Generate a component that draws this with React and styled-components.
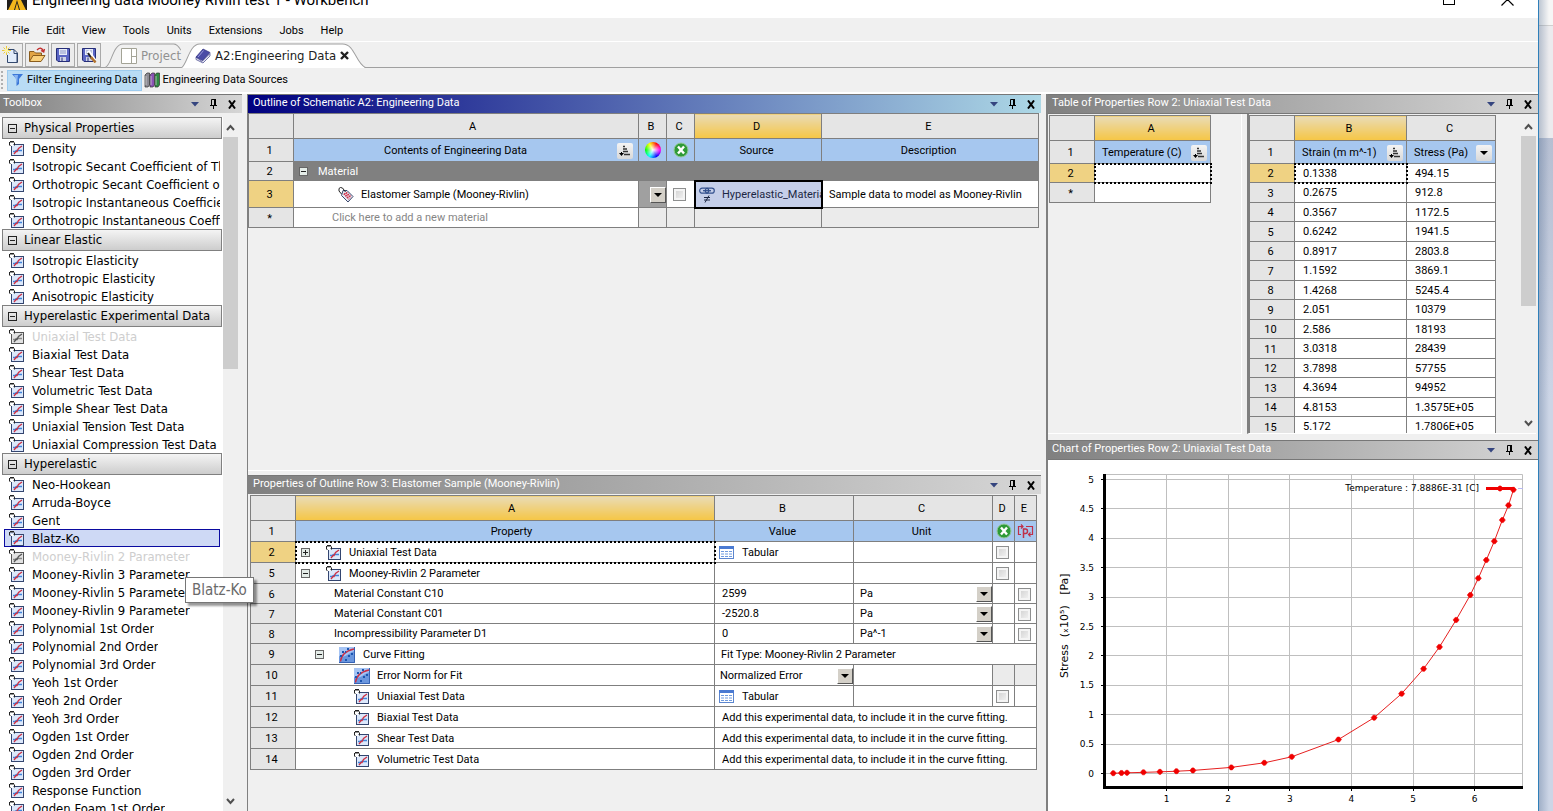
import { useState } from 'react';
import styled, { createGlobalStyle } from 'styled-components';

const UI_FONT = `Roboto, 'Noto Sans', sans-serif`;
const LIST_FONT = `'DejaVu Sans Condensed', 'Noto Sans', sans-serif`;

const COLOURS = {
  face: '#f0f0f0',
  line: '#7f7f7f',
  rowHead: '#e5e5e5',
  selectedHead: '#efd283',
  columnTitle: '#a6c7ef',
  disabled: '#ebebeb',
};

const CATEGORIES = [
  {
    name: 'Physical Properties',
    items: [
      'Density',
      'Isotropic Secant Coefficient of Thermal Expansion',
      'Orthotropic Secant Coefficient of Thermal Expansion',
      'Isotropic Instantaneous Coefficient of Thermal Expansion',
      'Orthotropic Instantaneous Coefficient of Thermal Expansion',
    ],
  },
  {
    name: 'Linear Elastic',
    items: ['Isotropic Elasticity', 'Orthotropic Elasticity', 'Anisotropic Elasticity'],
  },
  {
    name: 'Hyperelastic Experimental Data',
    items: [
      'Uniaxial Test Data',
      'Biaxial Test Data',
      'Shear Test Data',
      'Volumetric Test Data',
      'Simple Shear Test Data',
      'Uniaxial Tension Test Data',
      'Uniaxial Compression Test Data',
    ],
  },
  {
    name: 'Hyperelastic',
    items: [
      'Neo-Hookean',
      'Arruda-Boyce',
      'Gent',
      'Blatz-Ko',
      'Mooney-Rivlin 2 Parameter',
      'Mooney-Rivlin 3 Parameter',
      'Mooney-Rivlin 5 Parameter',
      'Mooney-Rivlin 9 Parameter',
      'Polynomial 1st Order',
      'Polynomial 2nd Order',
      'Polynomial 3rd Order',
      'Yeoh 1st Order',
      'Yeoh 2nd Order',
      'Yeoh 3rd Order',
      'Ogden 1st Order',
      'Ogden 2nd Order',
      'Ogden 3rd Order',
      'Response Function',
      'Ogden Foam 1st Order',
    ],
  },
];

const IN_USE = ['Uniaxial Test Data', 'Mooney-Rivlin 2 Parameter'];

const TEST_DATA = [
  ['0.1338', '494.15'],
  ['0.2675', '912.8'],
  ['0.3567', '1172.5'],
  ['0.6242', '1941.5'],
  ['0.8917', '2803.8'],
  ['1.1592', '3869.1'],
  ['1.4268', '5245.4'],
  ['2.051', '10379'],
  ['2.586', '18193'],
  ['3.0318', '28439'],
  ['3.7898', '57755'],
  ['4.3694', '94952'],
  ['4.8153', '1.3575E+05'],
  ['5.172', '1.7806E+05'],
];

const UPPER_POINTS = [
  [5.43, 215300],
  [5.7, 261200],
  [5.93, 303500],
  [6.06, 332000],
  [6.19, 363000],
  [6.32, 395000],
  [6.45, 431000],
  [6.55, 456000],
  [6.63, 482500],
];

function App() {
  return (
    <Desktop>
      <GlobalStyle />
      <Window>
        <TitleBar>
          <AnsysIcon />
          <TitleText>Engineering data Mooney Rivlin test 1 - Workbench</TitleText>
          <WindowControls />
        </TitleBar>
        <MenuBar>
          {['File', 'Edit', 'View', 'Tools', 'Units', 'Extensions', 'Jobs', 'Help'].map((name) => (
            <MenuItem key={name}>{name}</MenuItem>
          ))}
        </MenuBar>
        <ToolBar />
        <FilterBar>
          <Grip />
          <FilterButton $active>
            <FunnelIcon />
            Filter Engineering Data
          </FilterButton>
          <FilterButton>
            <BooksIcon />
            Engineering Data Sources
          </FilterButton>
        </FilterBar>
        <Workspace>
          <Toolbox />
          <Centre>
            <OutlinePanel />
            <PropertiesPanel />
          </Centre>
          <Right>
            <TablePanel />
            <ChartPanel />
          </Right>
        </Workspace>
      </Window>
      <Behind />
    </Desktop>
  );
}

function ToolBar() {
  return (
    <Tools>
      <ToolButton aria-label="New">
        <NewIcon />
      </ToolButton>
      <ToolButton aria-label="Open">
        <OpenIcon />
      </ToolButton>
      <ToolButton aria-label="Save">
        <SaveIcon />
      </ToolButton>
      <ToolButton aria-label="Save as">
        <SaveIcon pen />
      </ToolButton>
      <Tabs>
        <Tab>
          <TabShape viewBox="0 0 84 24" preserveAspectRatio="none">
            <path d="M0 23.5C7 23 8 1 20 1H76Q80 1 84 7" fill="#f0f0f0" stroke="#a0a0a0" />
          </TabShape>
          <ProjectIcon />
          Project
        </Tab>
        <Tab $active>
          <TabShape viewBox="0 0 188 24" preserveAspectRatio="none">
            <path d="M0 24C6 22 8 1 19 1H164C177 1 177 20 188 24" fill="#fff" stroke="#a0a0a0" />
          </TabShape>
          <BookIcon />
          A2:Engineering Data
          <CloseIcon />
        </Tab>
      </Tabs>
    </Tools>
  );
}

function PanelTitle({ children, active }) {
  return (
    <TitleStrip $active={active}>
      <PanelName>{children}</PanelName>
      <StripButton aria-label="Panel menu">
        <svg width="8" height="5">
          <path d="M0 0H8L4 4.5Z" fill="#35457f" />
        </svg>
      </StripButton>
      <StripButton aria-label="Pin">
        <svg width="9" height="11" fill="none" stroke="#000">
          <path d="M2.5 6V.5H7M1 6.5H8M4.5 6V10" />
          <path d="M6 0V6" strokeWidth="2" />
        </svg>
      </StripButton>
      <StripButton aria-label="Close">
        <svg width="8" height="9" stroke="#000" strokeWidth="2">
          <path d="M1 .5L7 8.5M7 .5L1 8.5" />
        </svg>
      </StripButton>
    </TitleStrip>
  );
}

function Toolbox() {
  const [selected, setSelected] = useState('Blatz-Ko');

  return (
    <ToolboxPanel>
      <PanelTitle>Toolbox</PanelTitle>
      <ToolboxBody>
        <ToolboxList>
          {CATEGORIES.map(({ name, items }) => (
            <section key={name}>
              <Category>
                <BoxSign />
                {name}
              </Category>
              {items.map((item) => (
                <Item
                  key={item}
                  $selected={item === selected}
                  disabled={IN_USE.includes(item)}
                  onClick={() => setSelected(item)}
                >
                  <ModelIcon grey={IN_USE.includes(item)} />
                  <ItemName>{item}</ItemName>
                  {item === selected && <Tooltip role="tooltip">{item}</Tooltip>}
                </Item>
              ))}
            </section>
          ))}
        </ToolboxList>
        <Scrollbar thumb={232} />
      </ToolboxBody>
    </ToolboxPanel>
  );
}

function Scrollbar({ thumb }) {
  return (
    <Track>
      <ScrollButton aria-label="Scroll up">
        <Chevron />
      </ScrollButton>
      <Thumb style={{ height: thumb }} />
      <ScrollButton aria-label="Scroll down">
        <Chevron down />
      </ScrollButton>
    </Track>
  );
}

function OutlinePanel() {
  return (
    <OutlineBox>
      <PanelTitle active>Outline of Schematic A2: Engineering Data</PanelTitle>
      <Sheet>
        <colgroup>
          <Col $width={45} />
          <Col />
          <Col $width={28} />
          <Col $width={28} />
          <Col $width={127} />
          <Col $width={217} />
        </colgroup>
        <tbody>
          <Row $height={25}>
            <RowHead />
            <Letter $wide>A</Letter>
            <Letter>B</Letter>
            <Letter>C</Letter>
            <Letter $selected>D</Letter>
            <Letter>E</Letter>
          </Row>
          <Row $height={23}>
            <RowHead>1</RowHead>
            <ColumnTitle>
              <TitleWithButton>
                <span>Contents of Engineering Data</span>
                <SortButton />
              </TitleWithButton>
            </ColumnTitle>
            <ColumnTitle>
              <ColourWheel />
            </ColumnTitle>
            <ColumnTitle>
              <SuppressIcon />
            </ColumnTitle>
            <ColumnTitle>Source</ColumnTitle>
            <ColumnTitle>Description</ColumnTitle>
          </Row>
          <Row $height={19}>
            <RowHead>2</RowHead>
            <GroupCell colSpan={5}>
              <Line $indent={5} $gap={10}>
                <BoxSign shaded />
                Material
              </Line>
            </GroupCell>
          </Row>
          <Row $height={27}>
            <RowHead $selected>3</RowHead>
            <Cell>
              <Line $indent={44} $gap={7}>
                <TagIcon />
                Elastomer Sample (Mooney-Rivlin)
              </Line>
            </Cell>
            <Cell $fill="#a0a0a0">
              <Picker label="Colour" />
            </Cell>
            <Cell $centre>
              <Check label="Suppress Elastomer Sample" />
            </Cell>
            <Cell $fill="#c5cfe9" $boxed>
              <Line $indent={4} $gap={7}>
                <LinkIcon />
                Hyperelastic_Materials.xml
              </Line>
            </Cell>
            <Cell $indent={7}>Sample data to model as Mooney-Rivlin</Cell>
          </Row>
          <Row $height={20}>
            <RowHead>*</RowHead>
            <Cell $indent={38} $muted>
              Click here to add a new material
            </Cell>
            <Cell $fill={COLOURS.disabled} />
            <Cell $fill={COLOURS.disabled} />
            <Cell $fill={COLOURS.disabled} />
            <Cell $fill={COLOURS.disabled} />
          </Row>
        </tbody>
      </Sheet>
    </OutlineBox>
  );
}

function PropertiesPanel() {
  const constants = [
    [6, 'Material Constant C10', '2599', 'Pa'],
    [7, 'Material Constant C01', '-2520.8', 'Pa'],
    [8, 'Incompressibility Parameter D1', '0', 'Pa^-1'],
  ];
  const missing = [
    [12, 'Biaxial Test Data'],
    [13, 'Shear Test Data'],
    [14, 'Volumetric Test Data'],
  ];

  return (
    <PropertiesBox>
      <PanelTitle>Properties of Outline Row 3: Elastomer Sample (Mooney-Rivlin)</PanelTitle>
      <Inset>
        <Sheet>
          <colgroup>
            <Col $width={45} />
            <Col />
            <Col $width={139} />
            <Col $width={139} />
            <Col $width={22} />
            <Col $width={22} />
          </colgroup>
          <tbody>
            <Row $height={25}>
              <RowHead />
              <Letter $selected $wide>
                A
              </Letter>
              <Letter>B</Letter>
              <Letter>C</Letter>
              <Letter>D</Letter>
              <Letter>E</Letter>
            </Row>
            <Row $height={21}>
              <RowHead>1</RowHead>
              <ColumnTitle $wide>Property</ColumnTitle>
              <ColumnTitle>Value</ColumnTitle>
              <ColumnTitle>Unit</ColumnTitle>
              <ColumnTitle>
                <SuppressIcon />
              </ColumnTitle>
              <ColumnTitle>
                <ParameterIcon />
              </ColumnTitle>
            </Row>
            <Row $height={21}>
              <RowHead $selected>2</RowHead>
              <Cell $dotted>
                <Line $indent={5} $gap={16}>
                  <BoxSign plus shaded />
                  <IconText>
                    <ModelIcon />
                    Uniaxial Test Data
                  </IconText>
                </Line>
              </Cell>
              <Cell>
                <Line $indent={4} $gap={8}>
                  <GridIcon />
                  Tabular
                </Line>
              </Cell>
              <Cell />
              <Cell $centre>
                <Check label="Suppress Uniaxial Test Data" />
              </Cell>
              <Cell />
            </Row>
            <Row $height={21}>
              <RowHead>5</RowHead>
              <Cell>
                <Line $indent={5} $gap={16}>
                  <BoxSign shaded />
                  <IconText>
                    <ModelIcon />
                    Mooney-Rivlin 2 Parameter
                  </IconText>
                </Line>
              </Cell>
              <Cell />
              <Cell />
              <Cell $centre>
                <Check label="Suppress Mooney-Rivlin 2 Parameter" />
              </Cell>
              <Cell />
            </Row>
            {constants.map(([row, name, value, unit]) => (
              <Row $height={20} key={row}>
                <RowHead>{row}</RowHead>
                <Cell $indent={38}>{name}</Cell>
                <Cell $indent={7}>{value}</Cell>
                <Cell>
                  <Picker label={`Unit of ${name}`} options={[unit]} indent={6} />
                </Cell>
                <Cell />
                <Cell $centre>
                  <Check label={`Parameterize ${name}`} />
                </Cell>
              </Row>
            ))}
            <Row $height={21}>
              <RowHead>9</RowHead>
              <Cell>
                <Line $indent={19} $gap={15}>
                  <BoxSign shaded />
                  <IconText>
                    <FitIcon />
                    Curve Fitting
                  </IconText>
                </Line>
              </Cell>
              <Cell $indent={6} colSpan={4}>
                Fit Type: Mooney-Rivlin 2 Parameter
              </Cell>
            </Row>
            <Row $height={21}>
              <RowHead>10</RowHead>
              <Cell>
                <Line $indent={58} $gap={7}>
                  <FitIcon />
                  Error Norm for Fit
                </Line>
              </Cell>
              <Cell>
                <Picker label="Error norm for fit" options={['Normalized Error']} indent={5} />
              </Cell>
              <Cell />
              <Cell $fill={COLOURS.disabled} />
              <Cell $fill={COLOURS.disabled} />
            </Row>
            <Row $height={21}>
              <RowHead>11</RowHead>
              <Cell>
                <Line $indent={58} $gap={8}>
                  <ModelIcon />
                  Uniaxial Test Data
                </Line>
              </Cell>
              <Cell>
                <Line $indent={4} $gap={8}>
                  <GridIcon />
                  Tabular
                </Line>
              </Cell>
              <Cell />
              <Cell $centre>
                <Check label="Suppress Uniaxial Test Data in curve fitting" />
              </Cell>
              <Cell />
            </Row>
            {missing.map(([row, name]) => (
              <Row $height={21} key={row}>
                <RowHead>{row}</RowHead>
                <Cell>
                  <Line $indent={58} $gap={8}>
                    <ModelIcon />
                    {name}
                  </Line>
                </Cell>
                <Cell $indent={7} colSpan={4}>
                  Add this experimental data, to include it in the curve fitting.
                </Cell>
              </Row>
            ))}
          </tbody>
        </Sheet>
      </Inset>
    </PropertiesBox>
  );
}

function TablePanel() {
  return (
    <TableBox>
      <PanelTitle>Table of Properties Row 2: Uniaxial Test Data</PanelTitle>
      <Split>
        <TemperaturePane>
          <Sheet>
            <colgroup>
              <Col $width={45} />
              <Col $width={116} />
            </colgroup>
            <tbody>
              <Row $height={25}>
                <RowHead />
                <Letter $selected>A</Letter>
              </Row>
              <Row $height={23}>
                <RowHead>1</RowHead>
                <ColumnTitle>
                  <HeadLine>
                    Temperature (C)
                    <SortButton />
                  </HeadLine>
                </ColumnTitle>
              </Row>
              <Row $height={19}>
                <RowHead $selected>2</RowHead>
                <Cell $dotted />
              </Row>
              <Row $height={20}>
                <RowHead>*</RowHead>
                <Cell />
              </Row>
            </tbody>
          </Sheet>
        </TemperaturePane>
        <DataPane>
          <DataScroll>
            <Sheet>
              <colgroup>
                <Col $width={45} />
                <Col $width={112} />
                <Col $width={89} />
              </colgroup>
              <tbody>
                <Row $height={25}>
                  <RowHead />
                  <Letter $selected>B</Letter>
                  <Letter>C</Letter>
                </Row>
                <Row $height={23}>
                  <RowHead>1</RowHead>
                  <ColumnTitle>
                    <HeadLine>
                      Strain (m m^-1)
                      <SortButton />
                    </HeadLine>
                  </ColumnTitle>
                  <ColumnTitle>
                    <HeadLine>
                      Stress (Pa)
                      <SortButton plain />
                    </HeadLine>
                  </ColumnTitle>
                </Row>
                {TEST_DATA.map(([strain, stress], index) => (
                  <Row $height={index % 2 ? 20 : 19} key={strain}>
                    <RowHead $selected={index === 0}>{index + 2}</RowHead>
                    <Cell $indent={8} $dotted={index === 0}>
                      {strain}
                    </Cell>
                    <Cell $indent={8}>{stress}</Cell>
                  </Row>
                ))}
              </tbody>
            </Sheet>
          </DataScroll>
          <Scrollbar thumb={170} />
        </DataPane>
      </Split>
    </TableBox>
  );
}

const getX = (strain) => 57 + strain * 61.6;
const getY = (stress) => 313.5 - (stress / 100000) * 58.8;

function ChartPanel() {
  const points = [...TEST_DATA.map((pair) => pair.map(Number)), ...UPPER_POINTS].map(
    ([strain, stress]) => [getX(strain), getY(stress)]
  );
  const xTicks = [1, 2, 3, 4, 5, 6];
  const yTicks = [0, 0.5, 1, 1.5, 2, 2.5, 3, 3.5, 4, 4.5, 5];

  return (
    <ChartBox>
      <PanelTitle>Chart of Properties Row 2: Uniaxial Test Data</PanelTitle>
      <ChartArea>
        <Chart width="490" height="351" viewBox="0 0 490 351">
          <g stroke="#bfbfbf">
            <path d="M57 14.5H474.5V327" fill="none" />
            {xTicks.map((tick) => (
              <path key={tick} d={`M${Math.floor(getX(tick))}.5 15V327`} />
            ))}
            {yTicks.map((tick) => (
              <path key={tick} d={`M57 ${Math.floor(getY(tick * 100000))}.5H474`} />
            ))}
          </g>
          <path d="M56.5 14V327.5H475" fill="none" stroke="#000" strokeWidth="3" />
          <g stroke="#000">
            {xTicks.map((tick) => (
              <path key={tick} d={`M${Math.floor(getX(tick))}.5 327V331`} />
            ))}
            {yTicks.map((tick) => (
              <path key={tick} d={`M53 ${Math.floor(getY(tick * 100000))}.5H57`} />
            ))}
          </g>
          {xTicks.map((tick) => (
            <text key={tick} x={getX(tick)} y="342" textAnchor="middle">
              {tick}
            </text>
          ))}
          {yTicks.map((tick) => (
            <text key={tick} x="46" y={getY(tick * 100000) + 3} textAnchor="end">
              {tick}
            </text>
          ))}
          <AxisName transform="translate(20 218) rotate(-90)">
            {'Stress  (ₓ10⁵)   [Pa]'}
          </AxisName>
          <text x="431" y="31" textAnchor="end">
            Temperature : 7.8886E-31 [C]
          </text>
          <path d="M438 28.5H466" stroke="#f00000" strokeWidth="3" />
          <path d="M470 28.5H475" stroke="#b8b8f0" />
          <polyline
            points={points.map((point) => point.join()).join(' ')}
            fill="none"
            stroke="#e62020"
          />
          {[...points, [452, 28.5]].map(([x, y]) => (
            <path
              key={x}
              d={`M${x - 3} ${y}l2 -2.5h2l2 2.5l-2 2.5h-2z`}
              fill="#f00000"
              stroke="#f00000"
              strokeWidth="0.6"
            />
          ))}
        </Chart>
      </ChartArea>
    </ChartBox>
  );
}

function Picker({ label, options = [''], indent = 0 }) {
  return (
    <PickerBox>
      <Select aria-label={label} $indent={indent}>
        {options.map((option) => (
          <option key={option}>{option}</option>
        ))}
      </Select>
      <PickerArrow>
        <svg width="8" height="4">
          <path d="M0 0H8L4 4Z" />
        </svg>
      </PickerArrow>
    </PickerBox>
  );
}

function Check({ label }) {
  return <Checkbox type="checkbox" aria-label={label} />;
}

function SortButton({ plain }) {
  return (
    <SmallButton aria-label={plain ? 'Filter' : 'Sort'}>
      {plain ? (
        <svg width="8" height="4">
          <path d="M0 0H8L4 4Z" />
        </svg>
      ) : (
        <svg width="12" height="12">
          <path d="M0 8H5L2.5 11ZM2 7H3V9H2Z" />
          <path d="M4 1.5H6M4 4H8M4 6.5H9M5 9.5H11" stroke="#333" strokeWidth="1.5" />
        </svg>
      )}
    </SmallButton>
  );
}

function BoxSign({ plus, shaded }) {
  return (
    <svg width="9" height="9" stroke="#222">
      <rect
        x="0.5"
        y="0.5"
        width="8"
        height="8"
        fill={shaded ? '#e4ece8' : 'none'}
        stroke={shaded ? '#666' : '#222'}
      />
      <path d="M2 4.5H7" />
      {plus && <path d="M4.5 2V7" />}
    </svg>
  );
}

function Chevron({ down }) {
  return (
    <svg width="9" height="7" fill="none" stroke="#505050" strokeWidth="2">
      <path d={down ? 'M1 1L4.5 5L8 1' : 'M1 6L4.5 2L8 6'} />
    </svg>
  );
}

function ModelIcon({ grey }) {
  return (
    <svg width="15" height="16" fill="none">
      <rect
        x="2.5"
        y="3.5"
        width="12"
        height="11"
        fill={grey ? '#e2e2e2' : '#dce8fb'}
        stroke={grey ? '#555' : '#33456f'}
      />
      <path d="M4 10.5H6L7.5 9.5H13" stroke={grey ? '#888' : '#3f84dc'} strokeWidth="1.3" />
      <path d="M5 13L7 10.5H8L9.5 7.5L13 5" stroke={grey ? '#555' : '#cc3044'} strokeWidth="1.3" />
      <path d="M1 0H5V1.5H1Z" fill="#222" />
      <path d="M.5 1V4L1.5 5M5.5 1.5V4.5" stroke="#222" />
      <path d="M2 3H4.5V5H2Z" fill="#fff" />
    </svg>
  );
}

function FitIcon() {
  return (
    <svg width="16" height="16" fill="none">
      <rect width="16" height="16" fill="#a6c4f4" />
      <path d="M0 16V9C6 12 10 5 16 4V16Z" fill="#6a96de" />
      <path d="M0 15.5H15.5V0" stroke="#3562b4" />
      <path d="M1.5 14.5C2 9 6 4 15 2" stroke="#c83048" strokeWidth="1.3" />
      <path
        d="M3 4h2v2h-2zM8 1h2v2h-2zM6 12h2v2h-2zM9 8h2v2h-2zM12 6h2v2h-2zM1 8h2v2h-2zM6 4h1v2h-1z"
        fill="#1d56b0"
      />
    </svg>
  );
}

function GridIcon() {
  return (
    <svg width="15" height="13" fill="none">
      <rect x="0.5" y="0.5" width="14" height="12" fill="#fff" stroke="#5c86cf" />
      <rect width="15" height="3" fill="#4a7ad2" />
      <path d="M2 5.5h11M2 8h11M2 10.5h11" stroke="#6f9ade" />
      <path d="M5.5 4v8M9.5 4v8" stroke="#fff" />
    </svg>
  );
}

function SuppressIcon() {
  return (
    <svg width="16" height="16" fill="none">
      <circle cx="8" cy="8" r="7" fill="#2e9a37" stroke="#95c99a" />
      <path d="M5 4.5L11 11.5M11 4.5L5 11.5" stroke="#fff" strokeWidth="2.4" />
    </svg>
  );
}

function ParameterIcon() {
  return (
    <svg width="17" height="15" fill="none" stroke="#c03048" strokeWidth="1.2">
      <path d="M4 10.5H1.5V2.5H6M4 .5L6 2.5L4 4.5M9 2.5H15.5V10.5H11.5M13.5 8.5L11.5 10.5L13.5 12.5" />
      <path d="M6.5 14V5H8.5Q10.5 5 10.5 7.2Q10.5 9.5 8.5 9.5H6.5" strokeWidth="1.5" />
    </svg>
  );
}

function TagIcon() {
  return (
    <svg width="16" height="16" fill="none">
      <path d="M5 3.5L9 3.5L15 9.5L10 15L3.5 8.5Z" fill="#e6e9f2" stroke="#3a466c" />
      <path
        d="M6 6.5L11 12M8 5.5L13 10.5"
        stroke="#d0304a"
        strokeWidth="2"
        strokeDasharray="1.5 .8"
      />
      <path d="M3.5 7L1 4V1.5L2.5 .5L4.5 1L7.5 5" stroke="#222" />
    </svg>
  );
}

function LinkIcon() {
  return (
    <svg width="16" height="16" fill="none" stroke="#34528e">
      <rect x="0.7" y="1.2" width="9" height="5" rx="2.5" strokeWidth="1.2" />
      <rect x="6.3" y="1.2" width="9" height="5" rx="2.5" strokeWidth="1.2" />
      <path d="M4 3.7H12" strokeWidth="1.3" />
      <path d="M5 10.5H11M5 13H11M10 8.5L6 15.5" stroke="#1c2744" />
    </svg>
  );
}

function FunnelIcon() {
  return (
    <svg width="11" height="12">
      <path d="M0 0H11L7 5V10L4.5 12V5Z" fill="#3c78d8" />
      <path d="M2 1H6L5.5 5V9Z" fill="#8ab6f2" />
    </svg>
  );
}

function BooksIcon() {
  return (
    <svg width="16" height="16" stroke="#333" strokeWidth="0.7">
      <path d="M1 3L3 1H5.5V13L4 15H1Z" fill="#8c8a92" />
      <path d="M6 3L8 1H10.5V13L9 15H6Z" fill="#8a52b4" />
      <path d="M11 3L12.5 1H15.5V13L14 15H11Z" fill="#2e8a42" />
      <path d="M2 4V13M7 4V13M12 4V13" stroke="#ddd" />
    </svg>
  );
}

function BookIcon() {
  return (
    <svg width="16" height="16">
      <path d="M1 9L7 13.5L15 5.5V8L8 15L1 11.5Z" fill="#e7e9f4" stroke="#3d3f88" strokeWidth="0.7" />
      <path d="M1 9L8 1L15 4.5L7.5 12.5Z" fill="#4a4ba6" stroke="#303080" strokeWidth="0.7" />
      <path d="M3 9L8.5 2.5" stroke="#9a9bdc" />
    </svg>
  );
}

function ProjectIcon() {
  return (
    <svg width="16" height="16" fill="#fff" stroke="#a3a396">
      <path d="M.5 .5H15.5V15.5H.5ZM10.5 .5V15.5M10.5 8.5H15.5" />
    </svg>
  );
}

function CloseIcon() {
  return (
    <svg width="9" height="9" stroke="#222" strokeWidth="2.4">
      <path d="M1 1L8 8M8 1L1 8" />
    </svg>
  );
}

function NewIcon() {
  return (
    <svg width="18" height="18">
      <path d="M4.5 3.5H12L15.5 7V16.5H5.5V9" fill="#e3edfb" stroke="#34496e" />
      <path d="M12 3.5V7.5H16M15 8V16" fill="none" stroke="#34496e" />
      <path d="M4.5 0V9M0 4.5H9M1.5 1.5L7.5 7.5M7.5 1.5L1.5 7.5" stroke="#eac93a" />
      <circle cx="4.5" cy="4.5" r="2" fill="#fff3a0" />
    </svg>
  );
}

function OpenIcon() {
  return (
    <svg width="18" height="16">
      <path d="M1.5 14V4.5H6L7.5 6H13.5V8" fill="#e2a544" stroke="#8a5c1c" />
      <path d="M1.5 14.5L5 8.5H17L13 14.5Z" fill="#f9d17c" stroke="#8a5c1c" />
      <path d="M9 3Q13 -1 15.5 4M13 3.5L15.7 5L16.5 2" fill="none" stroke="#c22d2d" strokeWidth="1.3" />
    </svg>
  );
}

function SaveIcon({ pen }) {
  return (
    <svg width="16" height="16">
      <path d="M1.5 1.5H14.5V14.5H3L1.5 13Z" fill="#5b66c4" stroke="#262e78" />
      <rect x="4" y="2" width="8" height="6" fill="#e7ecf8" />
      <path d="M5 4H11M5 6H11" stroke="#8c97c6" />
      <rect x="5" y="10" width="6" height="4" fill="#cfd4e6" />
      <path d="M7 10.5V14" stroke="#262e78" />
      {pen && <path d="M7 4L14 14" stroke="#fff" strokeWidth="3.5" />}
      {pen && <path d="M7 6L11 12" stroke="#222" strokeWidth="2" />}
      {pen && <path d="M10 10L14.5 15.5" stroke="#b4742c" strokeWidth="2.4" />}
    </svg>
  );
}

function AnsysIcon() {
  return (
    <svg width="20" height="22">
      <rect width="20" height="22" fill="#221f1c" />
      <path d="M6 12H10L7 22H1ZM10 12H14L19 22H13Z" fill="#f4b81c" />
      <path d="M8 22L10 15L12 22Z" fill="#f4b81c" />
    </svg>
  );
}

function WindowControls() {
  return (
    <ControlStrip>
      <WindowButton aria-label="Maximize">
        <svg width="12" height="13" fill="none" stroke="#000">
          <rect x="0.5" y="0.5" width="11" height="11" />
        </svg>
      </WindowButton>
      <WindowButton aria-label="Close window">
        <svg width="13" height="13" fill="none" stroke="#000" strokeWidth="1.2">
          <path d="M.5 .5L12.5 12.5M12.5 .5L.5 12.5" />
        </svg>
      </WindowButton>
    </ControlStrip>
  );
}

const GlobalStyle = createGlobalStyle`
  * {
    box-sizing: border-box;
  }

  body {
    margin: 0;
    overflow: hidden;
    background: #c3ccdc;
    color: #000;
    font: 11px/16px ${UI_FONT};
  }

  button, select {
    margin: 0;
    padding: 0;
    border: none;
    background: none;
    color: inherit;
    font: inherit;
  }

  svg {
    display: block;
    flex: none;
  }
`;

const Desktop = styled.div`
  display: flex;
  height: 100vh;
`;

const Window = styled.main`
  flex: 1;
  min-width: 0;
  display: flex;
  flex-direction: column;
  background: ${COLOURS.face};
  border-right: 1px solid #2f7fb9;
`;

const Behind = styled.div`
  width: 14px;
  background:
    linear-gradient(to right, rgb(60 90 130 / 0.3), transparent 10px),
    linear-gradient(#f6f6f6 25px, #cfcfcf 25px 26px, #ebebee 26px 138px, #b6bfd2 138px, #ccd5e6 400px);
`;

const TitleBar = styled.header`
  height: 18px;
  flex: none;
  display: flex;
  align-items: flex-end;
  padding: 0 24px 8px 7px;
  background: #fff;
`;

const TitleText = styled.span`
  flex: 1;
  margin-left: 5px;
  font-size: 15px;
  line-height: 20px;
  white-space: nowrap;
`;

const ControlStrip = styled.div`
  display: flex;
  gap: 46px;
  padding-bottom: 4px;
`;

const WindowButton = styled.button``;

const MenuBar = styled.nav`
  height: 24px;
  flex: none;
  display: flex;
  align-items: center;
  gap: 17px;
  padding: 2px 0 0 12px;
  border-bottom: 1px solid #fff;
`;

const MenuItem = styled.button``;

const Tools = styled.div`
  height: 26px;
  flex: none;
  display: flex;
  align-items: flex-start;
  gap: 2px;
  padding-top: 1px;
  border-bottom: 1px solid #a0a0a0;
`;

const ToolButton = styled.button`
  width: 24px;
  height: 24px;
  display: grid;
  place-items: center;
  border: 1px solid #a9a9a9;
  background: #ececec;

  &:first-child {
    width: 23px;
    border-left: none;
  }
`;

const Tabs = styled.div`
  display: flex;
  margin-left: 2px;
`;

const Tab = styled.button`
  position: relative;
  z-index: 0;
  height: 25px;
  display: flex;
  align-items: center;
  gap: 4px;
  padding: 0 ${({ $active }) => ($active ? 17 : 0)}px 0 ${({ $active }) => ($active ? 14 : 16)}px;
  font: 13px ${LIST_FONT};
  white-space: nowrap;
  color: ${({ $active }) => ($active ? '#222' : '#909090')};
`;

const TabShape = styled.svg`
  position: absolute;
  inset: 0;
  width: 100%;
  height: 100%;
  z-index: -1;
`;

const FilterBar = styled.div`
  height: 26px;
  flex: none;
  display: flex;
  align-items: center;
  gap: 2px;
  padding: 0 1px;
  border-bottom: 2px solid #fff;
`;

const Grip = styled.span`
  width: 4px;
  height: 18px;
  border-left: 2px dotted #b0b0b0;
`;

const FilterButton = styled.button`
  height: 21px;
  display: flex;
  align-items: center;
  gap: ${({ $active }) => ($active ? 4 : 2)}px;
  padding: 0 ${({ $active }) => ($active ? 4 : 0)}px;
  border: ${({ $active }) => ($active ? '1px solid #9dcbee' : 'none')};
  background: ${({ $active }) => ($active ? '#b9dcf5' : 'none')};
  white-space: nowrap;
`;

const Workspace = styled.div`
  flex: 1;
  min-height: 0;
  display: flex;
`;

const TitleStrip = styled.h2`
  height: 19px;
  flex: none;
  display: flex;
  align-items: center;
  gap: 10px;
  margin: 0;
  padding: 0 6px 0 5px;
  border-top: 1px solid #777;
  color: #fff;
  font-size: 11px;
  font-weight: normal;
  background: ${({ $active }) =>
    $active
      ? 'linear-gradient(to right, #00007f, #add8e6)'
      : 'linear-gradient(to right, #808080, #d6d6d6)'};
`;

const PanelName = styled.span`
  flex: 1;
  line-height: 14px;
  padding-bottom: 2px;
  white-space: nowrap;
`;

const StripButton = styled.button``;

const ToolboxPanel = styled.aside`
  width: 242px;
  flex: none;
  display: flex;
  flex-direction: column;

  ${TitleStrip} {
    padding-left: 3px;
  }
`;

const ToolboxBody = styled.div`
  flex: 1;
  min-height: 0;
  display: flex;
  padding: 4px 4px 0 0;
`;

const ToolboxList = styled.div`
  flex: 1;
  min-width: 0;
  padding: 0 1px 0 2px;
  background: #fff;
`;

const Category = styled.h3`
  height: 22px;
  display: flex;
  align-items: center;
  gap: 7px;
  margin: 0;
  padding-left: 5px;
  border: 1px solid #808080;
  background: linear-gradient(#f4f4f4, #cdcdcd);
  font: 13px/18px ${LIST_FONT};
`;

const Item = styled.button`
  position: relative;
  width: calc(100% - 4px);
  height: 18px;
  display: flex;
  align-items: center;
  gap: 8px;
  margin-left: 2px;
  padding: 2px 0 0 ${({ $selected }) => ($selected ? 4 : 5)}px;
  border: ${({ $selected }) => ($selected ? '1px solid #0a0aa0' : 'none')};
  background: ${({ $selected }) => ($selected ? '#ced9f5' : 'none')};
  color: ${({ disabled }) => (disabled ? '#cecece' : '#000')};
  font: 13px/16px ${LIST_FONT};
`;

const ItemName = styled.span`
  overflow: hidden;
  white-space: nowrap;
`;

const Tooltip = styled.span`
  position: absolute;
  z-index: 2;
  top: 47px;
  left: 180px;
  padding: 2px 6px;
  border: 1px solid #767676;
  background: #fff;
  box-shadow: 3px 3px 2px rgb(0 0 0 / 0.4);
  color: #6a6a6a;
  font-size: 15px;
  line-height: 20px;
  white-space: nowrap;
`;

const Track = styled.div`
  width: 15px;
  flex: none;
  display: flex;
  flex-direction: column;
  background: ${COLOURS.face};
`;

const ScrollButton = styled.button`
  height: 20px;
  display: grid;
  place-items: center;

  &:last-child {
    margin-top: auto;
  }
`;

const Thumb = styled.div`
  background: #cdcdcd;
`;

const Centre = styled.div`
  flex: 1;
  min-width: 0;
  display: flex;
  flex-direction: column;
  margin: 0 5px;
  border-left: 1px solid #808080;
`;

const OutlineBox = styled.section`
  height: 377px;
  flex: none;
  border-bottom: 1px solid #fff;

  > table {
    width: calc(100% - 2px);
  }
`;

const PropertiesBox = styled.section`
  flex: 1;
  padding-top: 4px;
`;

const Inset = styled.div`
  padding: 1px 4px 0 2px;
`;

const Sheet = styled.table`
  width: 100%;
  table-layout: fixed;
  border-collapse: collapse;
`;

const Col = styled.col`
  width: ${({ $width }) => ($width ? `${$width}px` : 'auto')};
`;

const Row = styled.tr`
  height: ${({ $height }) => $height}px;
`;

const Cell = styled.td`
  padding: 1px ${({ $centre }) => ($centre ? 2 : 0)}px 0 ${({ $indent = 0 }) => $indent}px;
  overflow: hidden;
  border: 1px solid ${COLOURS.line};
  background: ${({ $fill = '#fff' }) => $fill};
  color: ${({ $muted }) => ($muted ? '#858585' : '#000')};
  line-height: 14px;
  text-align: left;
  white-space: nowrap;
  ${({ $dotted }) =>
    $dotted &&
    `
    outline: 2px dotted black;
    outline-offset: -1px;
  `}
  ${({ $boxed }) =>
    $boxed &&
    `
    color: #1c2744;
    outline: 2px solid black;
    outline-offset: -1px;
  `}
`;

const GroupCell = styled(Cell)`
  background: #808080;
  color: #fff;
`;

const RowHead = styled.th`
  padding: 2px 3px 0 ${({ $wide }) => ($wide ? 16 : 0)}px;
  border: 1px solid ${COLOURS.line};
  background: ${({ $selected }) => ($selected ? COLOURS.selectedHead : COLOURS.rowHead)};
  font-weight: normal;
  line-height: 14px;
`;

const Letter = styled(RowHead)`
  background: ${({ $selected }) =>
    $selected ? 'linear-gradient(#e9dbb6, #f6c644)' : COLOURS.rowHead};
`;

const ColumnTitle = styled(RowHead)`
  background: ${COLOURS.columnTitle};

  &:has(> svg, > span) {
    padding: 0;
  }

  > svg {
    margin: 0 auto;
  }
`;

const TitleWithButton = styled.div`
  display: grid;
  grid-template-columns: 1fr 18px;
  align-items: center;
`;

const HeadLine = styled.div`
  display: flex;
  align-items: center;
  justify-content: space-between;
  padding-left: 7px;
  white-space: nowrap;
`;

const Line = styled.div`
  display: flex;
  align-items: center;
  gap: ${({ $gap }) => $gap}px;
  padding-left: ${({ $indent }) => $indent}px;
`;

const IconText = styled.span`
  display: flex;
  align-items: center;
  gap: 8px;
`;

const SmallButton = styled.button`
  width: 16px;
  height: 16px;
  display: grid;
  place-items: center;
  border-radius: 2px;
  background: linear-gradient(#f4f4f4, #d8d8d8);
`;

const ColourWheel = styled.span`
  display: block;
  width: 16px;
  height: 16px;
  margin: 0 auto;
  border-radius: 50%;
  background:
    radial-gradient(#fff, transparent 65%),
    conic-gradient(from 90deg, #f0f, #00f, #0ff, #0f0, #ff0, #f00, #f0f);
`;

const Checkbox = styled.input`
  appearance: none;
  display: block;
  width: 13px;
  height: 13px;
  margin: 0 auto;
  border: 1px solid #8e8f8f;
  background: linear-gradient(135deg, #cfcfcf, #f6f6f6);
  box-shadow: inset 0 0 0 2px #f4f4f4;
`;

const PickerBox = styled.div`
  display: grid;
  align-items: center;
`;

const Select = styled.select`
  grid-area: 1 / 1;
  appearance: none;
  height: 16px;
  padding-left: ${({ $indent }) => $indent}px;
`;

const PickerArrow = styled.span`
  grid-area: 1 / 1;
  justify-self: end;
  width: 16px;
  height: 16px;
  display: grid;
  place-items: center;
  border: 1px solid;
  border-color: #fff #555 #555 #fff;
  background: #d4d0c8;
  pointer-events: none;
`;

const Right = styled.div`
  width: 492px;
  flex: none;
  display: flex;
  flex-direction: column;
  border-left: 2px solid #808080;

  ${TitleStrip} {
    padding-left: 4px;
  }
`;

const TableBox = styled.section`
  height: 346px;
  flex: none;
  display: flex;
  flex-direction: column;
  padding-bottom: 6px;
`;

const Split = styled.div`
  flex: 1;
  min-height: 0;
  display: flex;
  padding-right: 2px;
  border-top: 1px solid #777;
`;

const TemperaturePane = styled.div`
  width: 194px;
  flex: none;
  padding: 1px 0 0 1px;
  border-right: 1px solid #fff;
  border-bottom: 1px solid #fff;

  table {
    width: 162px;
  }
`;

const DataPane = styled.div`
  flex: 1;
  min-height: 0;
  display: flex;
  justify-content: space-between;
  margin-left: 5px;
  border-left: 2px solid #808080;
  border-bottom: 1px solid #fff;

  ${Track} {
    padding-top: 2px;
  }
`;

const DataScroll = styled.div`
  overflow: hidden;
  padding: 1px 0 0;

  table {
    width: 247px;
  }
`;

const ChartBox = styled.section`
  flex: 1;
  min-height: 0;
  display: flex;
  flex-direction: column;
`;

const ChartArea = styled.div`
  flex: 1;
  background: #fff;
  border-top: 1px solid #777;
`;

const Chart = styled.svg`
  font: 9px 'DejaVu Sans', sans-serif;
`;

const AxisName = styled.text`
  font-size: 11px;
  white-space: pre;
`;

export default App;
